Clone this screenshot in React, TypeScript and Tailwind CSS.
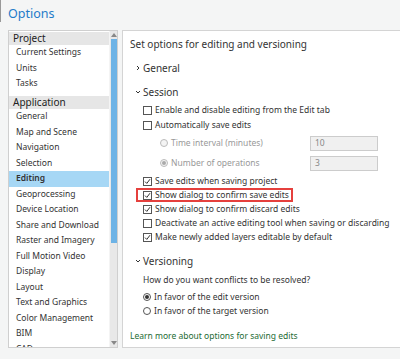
import React from 'react';

const font = { fontFamily: '"Noto Sans", "Open Sans", Arial, sans-serif' };

const ListHeader = ({ label, className = '' }: { label: string; className?: string }) => (
  <div className={`h-[13px] bg-[#e6e6e6] pl-[4px] flex items-center text-[10px] text-[#222] ${className}`}>
    {label}
  </div>
);

const ListItem = ({ label, selected = false }: { label: string; selected?: boolean }) => (
  <div
    className={`h-[15.5px] pl-[7px] flex items-center text-[8.5px] text-[#333] whitespace-nowrap ${
      selected ? 'bg-[#a6d7f5] font-semibold text-[#111]' : ''
    }`}
  >
    {label}
  </div>
);

const Chevron = ({ open }: { open: boolean }) => (
  <svg width="6" height="6" viewBox="0 0 6 6" className="shrink-0">
    {open ? (
      <path d="M1 2 L3 4 L5 2" fill="none" stroke="#333" strokeWidth="1" />
    ) : (
      <path d="M2 1 L4 3 L2 5" fill="none" stroke="#333" strokeWidth="1" />
    )}
  </svg>
);

const Checkbox = ({ checked }: { checked: boolean }) => (
  <span className="w-[9px] h-[9px] border border-[#555] bg-white flex items-center justify-center shrink-0">
    {checked && (
      <svg width="7" height="7" viewBox="0 0 7 7">
        <path d="M1 3.6 L2.8 5.4 L6 1.2" fill="none" stroke="#333" strokeWidth="1" />
      </svg>
    )}
  </span>
);

const Radio = ({ checked, disabled = false }: { checked: boolean; disabled?: boolean }) => (
  <span
    className={`w-[8px] h-[8px] rounded-full border flex items-center justify-center shrink-0 ${
      disabled ? 'border-[#bbb] bg-[#f4f4f4]' : 'border-[#555] bg-white'
    }`}
  >
    {checked && (
      <span className={`w-[4px] h-[4px] rounded-full ${disabled ? 'bg-[#aaa]' : 'bg-[#333]'}`} />
    )}
  </span>
);

const CheckRow = ({ label, checked, className = '' }: { label: string; checked: boolean; className?: string }) => (
  <div className={`h-[14px] flex items-center gap-[3px] pl-[20px] text-[8.5px] text-[#333] whitespace-nowrap ${className}`}>
    <Checkbox checked={checked} />
    <span>{label}</span>
  </div>
);

const SectionRow = ({ label, open, className = '' }: { label: string; open: boolean; className?: string }) => (
  <div className={`h-[16px] flex items-center gap-[2px] pl-[12px] text-[10px] text-[#333] ${className}`}>
    <Chevron open={open} />
    <span>{label}</span>
  </div>
);

const SubOption = ({ label, value, checked, className = '' }: { label: string; value: string; checked: boolean; className?: string }) => (
  <div className={`h-[16px] flex items-center ${className}`}>
    <div className="flex items-center gap-[3px] pl-[37px] w-[187px] text-[8.5px] text-[#999] whitespace-nowrap">
      <Radio checked={checked} disabled />
      <span>{label}</span>
    </div>
    <div className="w-[68px] h-[15px] border border-[#ccc] bg-[#f0f0f0] pl-[4px] flex items-center text-[8.5px] text-[#888]">
      {value}
    </div>
  </div>
);

const VersionRadio = ({ label, checked }: { label: string; checked: boolean }) => (
  <div className="h-[14px] flex items-center gap-[3px] pl-[20px] text-[8.5px] text-[#333] whitespace-nowrap">
    <Radio checked={checked} />
    <span>{label}</span>
  </div>
);

const App = () => {
  return (
    <div className="w-[400px] h-[359px] bg-[#f4f5f5] overflow-hidden relative" style={font}>
      <div className="absolute left-0 top-0 w-[1px] h-[22px] bg-[#999]" />
      <div className="h-[30px] pl-[8px] pt-[3px] text-[12.5px] text-[#1f7bc9] leading-[22px]">Options</div>

      <div className="flex gap-[4px] pl-[8px]">
        {/* left navigation list */}
        <div className="w-[110px] h-[318px] border border-[#cfcfcf] bg-white flex overflow-hidden">
          <div className="flex-1 pt-[1px] overflow-hidden">
            <ListHeader label="Project" />
            <ListItem label="Current Settings" />
            <ListItem label="Units" />
            <ListItem label="Tasks" />
            <ListHeader label="Application" className="mt-[4.5px]" />
            <ListItem label="General" />
            <ListItem label="Map and Scene" />
            <ListItem label="Navigation" />
            <ListItem label="Selection" />
            <ListItem label="Editing" selected />
            <ListItem label="Geoprocessing" />
            <ListItem label="Device Location" />
            <ListItem label="Share and Download" />
            <ListItem label="Raster and Imagery" />
            <ListItem label="Full Motion Video" />
            <ListItem label="Display" />
            <ListItem label="Layout" />
            <ListItem label="Text and Graphics" />
            <ListItem label="Color Management" />
            <ListItem label="BIM" />
            <ListItem label="CAD" />
          </div>
          <div className="w-[8px] bg-[#e8e8e8] flex flex-col items-center border-l border-[#f4f4f4]">
            <svg width="6" height="7" viewBox="0 0 6 7" className="mt-[1px]">
              <path d="M0 5 L3 1 L6 5 Z" fill="#888" />
            </svg>
            <div className="w-[6px] h-[204px] bg-[#6db3e6]" />
            <div className="flex-1" />
            <svg width="6" height="7" viewBox="0 0 6 7" className="mb-[1px]">
              <path d="M0 2 L3 6 L6 2 Z" fill="#888" />
            </svg>
          </div>
        </div>

        {/* right options panel */}
        <div className="flex-1 h-[318px] border border-[#d4d4d4] border-r-0 bg-white">
          <div className="h-[26px] pl-[7px] flex items-center text-[10px] text-[#333]">
            Set options for editing and versioning
          </div>
          <SectionRow label="General" open={false} className="mt-[3px]" />
          <SectionRow label="Session" open className="mt-[8px]" />
          <CheckRow label="Enable and disable editing from the Edit tab" checked={false} className="mt-[3px]" />
          <CheckRow label="Automatically save edits" checked={false} className="mt-[1px]" />
          <SubOption label="Time interval (minutes)" value="10" checked={false} className="mt-[3px]" />
          <SubOption label="Number of operations" value="3" checked className="mt-[4px]" />
          <CheckRow label="Save edits when saving project" checked className="mt-[3px]" />
          <div className="ml-[13px] w-fit h-[14px] border-2 border-[#e5403d] flex items-center gap-[3px] pl-[5px] pr-[2px] text-[8.5px] text-[#333] whitespace-nowrap">
            <Checkbox checked />
            <span>Show dialog to confirm save edits</span>
          </div>
          <CheckRow label="Show dialog to confirm discard edits" checked />
          <CheckRow label="Deactivate an active editing tool when saving or discarding" checked={false} />
          <CheckRow label="Make newly added layers editable by default" checked />
          <SectionRow label="Versioning" open className="mt-[9px]" />
          <div className="h-[14px] mt-[4px] pl-[20px] flex items-center text-[8.5px] text-[#333]">
            How do you want conflicts to be resolved?
          </div>
          <div className="mt-[3px]">
            <VersionRadio label="In favor of the edit version" checked />
            <VersionRadio label="In favor of the target version" checked={false} />
          </div>
          <div className="h-[14px] mt-[11px] pl-[7px] flex items-center text-[8.5px] text-[#1d6b34]">
            Learn more about options for saving edits
          </div>
        </div>
      </div>
    </div>
  );
};

export default App;
